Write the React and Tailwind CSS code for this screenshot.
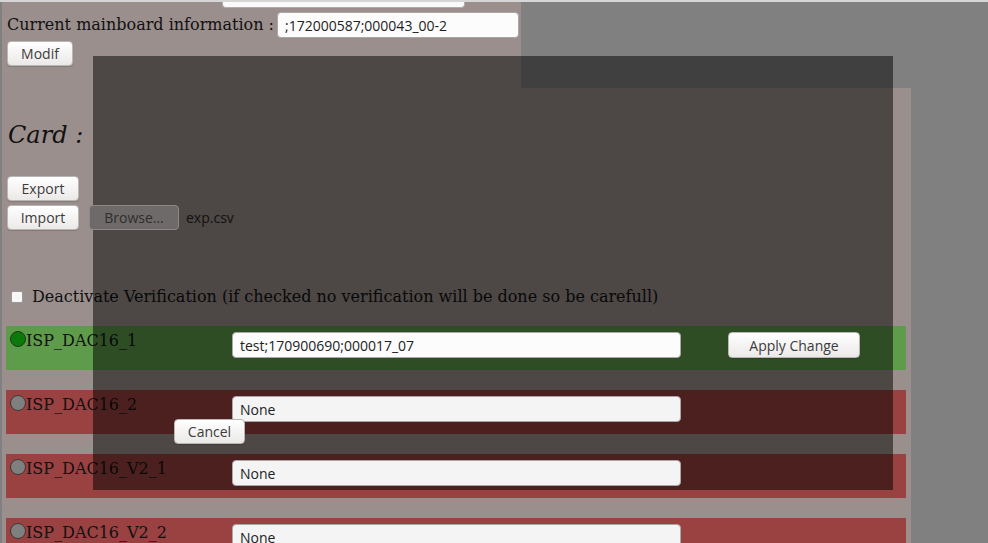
const rows = [
  { name: 'ISP_DAC16_1', value: 'test;170900690;000017_07', ok: true },
  { name: 'ISP_DAC16_2', value: 'None', ok: false },
  { name: 'ISP_DAC16_V2_1', value: 'None', ok: false },
  { name: 'ISP_DAC16_V2_2', value: 'None', ok: false },
];

const serif = { fontFamily: "'DejaVu Serif', 'Liberation Serif', serif" };

const btn =
  'relative z-20 rounded-[4px] border border-[#b9b6b4] bg-gradient-to-b from-[#ffffff] to-[#ebe9e8] text-[14px] text-[#3c3c3c] flex items-center justify-center shadow-[0_1px_1px_rgba(0,0,0,0.15)]';

function CardRow({ row }) {
  return (
    <div
      className={`ml-[4px] w-[900px] h-[44px] flex items-start pt-[5px] pl-[4px] ${
        row.ok ? 'bg-[#5e9b4a]' : 'bg-[#9a4141]'
      }`}
    >
      <div
        className={`w-[16px] h-[16px] rounded-full border ${
          row.ok ? 'bg-[#0b7a0b] border-[#1c3a1a]' : 'bg-[#7f7f7f] border-[#3a3a3a]'
        }`}
      />
      <div className="w-[206px] pt-[1px] text-[16px] leading-[17px] text-[#111] whitespace-nowrap" style={serif}>
        {row.name}
      </div>
      <div
        className={`relative z-20 mt-[1px] w-[449px] h-[26px] rounded-[4px] border border-[#aaa7a6] px-[7px] flex items-center text-[14px] text-[#222] ${
          row.ok ? 'bg-[#fcfcfc]' : 'bg-[#f4f4f4]'
        }`}
      >
        {row.value}
      </div>
      {row.ok && <div className={`${btn} ml-[47px] mt-[1px] w-[132px] h-[26px]`}>Apply Change</div>}
    </div>
  );
}

export default function App() {
  return (
    <div
      className="relative w-[988px] h-[543px] overflow-hidden bg-[#808080] border-t-2 border-[#d6d6d6]"
      style={{ fontFamily: "'Open Sans', 'Noto Sans', sans-serif" }}
    >
      <div className="ml-[2px] w-[909px]">
        {/* header */}
        <div className="w-[519px] h-[86px] bg-[#9a8f8d]">
          <div className="ml-[220px] w-[243px] h-[6px] bg-[#fafafa] border border-t-0 border-[#b0adac] rounded-b-[4px]" />
          <div className="mt-[4px] ml-[5px] flex items-center h-[26px]">
            <span className="text-[16px] text-[#111] whitespace-nowrap" style={serif}>
              Current mainboard information :
            </span>
            <div className="relative z-20 ml-[3px] w-[242px] h-[26px] rounded-[4px] border border-[#aaa7a6] bg-[#fcfcfc] px-[7px] flex items-center text-[14px] text-[#222]">
              ;172000587;000043_00-2
            </div>
          </div>
          <div className={`${btn} mt-[3px] ml-[5px] w-[66px] h-[25px]`}>Modif</div>
        </div>

        {/* body */}
        <div className="bg-[#9a8f8d] h-[455px]">
          <h2 className="pt-[29px] ml-[6px] h-[65px] leading-[36px] text-[24px] italic text-[#111]" style={serif}>
            Card :
          </h2>
          <div className={`${btn} mt-[23px] ml-[5px] w-[72px] h-[25px]`}>Export</div>
          <div className="mt-[4px] ml-[5px] flex items-center h-[25px]">
            <div className={`${btn} w-[72px] h-[25px]`}>Import</div>
            <div className="relative z-20 ml-[10px] w-[90px] h-[25px] rounded-[4px] border border-[#8c8887] bg-[#6e6a69] text-[14px] text-[#2e2e2e] flex items-center justify-center">
              Browse...
            </div>
            <span className="relative z-20 ml-[7px] text-[14px] text-[#111]">exp.csv</span>
          </div>
          <div className="mt-[57px] ml-[9px] flex items-center h-[20px]">
            <div className="w-[12px] h-[12px] rounded-[2px] border border-[#9a9a9a] bg-[#f7f7f7]" />
            <span className="ml-[9px] text-[16px] text-[#111]" style={serif}>
              Deactivate Verification (if checked no verification will be done so be carefull)
            </span>
          </div>
          <div className="mt-[19px] flex flex-col gap-[20px]">
            {rows.map((r) => (
              <CardRow key={r.name} row={r} />
            ))}
          </div>
        </div>
      </div>

      {/* modal overlay */}
      <div className="absolute left-[93px] top-[54px] w-[800px] h-[434px] bg-black/50 z-10" />
      <div className={`${btn} !absolute left-[174px] top-[417px] w-[71px] h-[25px]`}>Cancel</div>
    </div>
  );
}
